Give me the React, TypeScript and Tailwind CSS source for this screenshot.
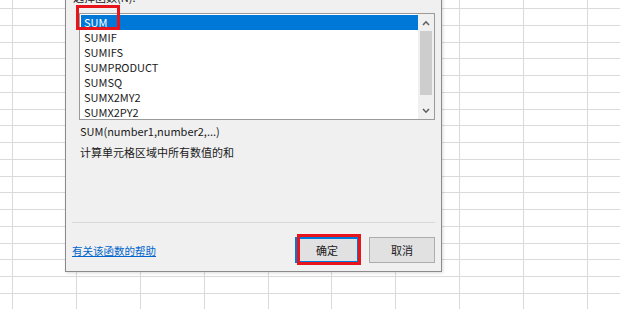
import React from 'react'

const font = { fontFamily: '"Noto Sans CJK SC", "Noto Sans", sans-serif' }

const functions = ['SUM', 'SUMIF', 'SUMIFS', 'SUMPRODUCT', 'SUMSQ', 'SUMX2MY2', 'SUMX2PY2']

function SheetGrid() {
  const rows = Array.from({ length: 19 })
  const cols = Array.from({ length: 9 })
  return (
    <div className="flex flex-col">
      <div className="flex h-[9px] border-b border-[#dadada]">
        <div className="w-[13px] shrink-0 border-r border-[#dadada]" />
        {cols.map((_, c) => (
          <div key={c} className="w-[63.9px] shrink-0 border-r border-[#dadada]" />
        ))}
      </div>
      {rows.map((_, r) => (
        <div key={r} className="flex h-[16.78px] shrink-0 border-b border-[#dadada]">
          <div className="w-[13px] shrink-0 border-r border-[#dadada]" />
          {cols.map((_, c) => (
            <div key={c} className="w-[63.9px] shrink-0 border-r border-[#dadada]" />
          ))}
        </div>
      ))}
    </div>
  )
}

function Chevron({ up }: { up?: boolean }) {
  return (
    <svg width="8" height="6" viewBox="0 0 8 6" className={up ? '' : 'rotate-180'}>
      <path d="M1 5 L4 1.8 L7 5" fill="none" stroke="#606060" strokeWidth="1.6" />
    </svg>
  )
}

function FunctionList() {
  return (
    <div className="relative ml-[13px] mt-[6px] h-[107px] w-[356px] border border-[#9a9a9a] bg-white">
      <div className="flex h-full">
        <div className="flex flex-1 flex-col pl-px pt-px">
          {functions.map((f, i) => (
            <div
              key={f}
              className={`flex h-[15px] items-center pl-[3px] text-[11px] leading-[15px] ${
                i === 0 ? 'bg-[#0078d7] text-white' : 'text-[#1a1a1a]'
              }`}
            >
              {f}
            </div>
          ))}
        </div>
        <div className="flex w-[16px] flex-col bg-[#f0f0f0]">
          <div className="flex h-[17px] items-center justify-center">
            <Chevron up />
          </div>
          <div className="mx-[2px] h-[64px] bg-[#cdcdcd]" />
          <div className="flex-1" />
          <div className="flex h-[17px] items-center justify-center">
            <Chevron />
          </div>
        </div>
      </div>
      {/* red highlight around SUM */}
      <div className="absolute left-[-4px] top-[-9px] h-[25px] w-[44px] border-[3px] border-[#e8141b]" />
    </div>
  )
}

export default function App() {
  return (
    <div className="relative h-[309px] w-[620px] overflow-hidden bg-white" style={font}>
      <SheetGrid />
      <div className="absolute left-[65px] top-[-20px] flex h-[292px] w-[377px] flex-col border border-[#8a8a8a] bg-[#f0f0f0] pt-[9px] shadow-[1px_1px_3px_rgba(0,0,0,0.15)]">
        <div className="ml-[7px] text-[11px] leading-[15px] text-[#1a1a1a]">选择函数(N):</div>
        <div className="h-[2px]" />
        <FunctionList />
        <div className="ml-[14px] mt-[4px] text-[11px] leading-[15px] text-[#1a1a1a]">SUM(number1,number2,...)</div>
        <div className="ml-[14px] mt-[6px] text-[11px] leading-[15px] text-[#1a1a1a]">计算单元格区域中所有数值的和</div>
        <div className="mx-[6px] mt-[62px] h-px bg-[#d9d9d9]" />
        <div className="mx-[6px] mt-[14px] flex items-center">
          <a className="text-[10.5px] leading-[15px] text-[#0066cc] underline">有关该函数的帮助</a>
          <div className="ml-auto flex gap-[10px]">
            <div className="relative flex h-[26px] w-[64px] items-center justify-center border-2 border-[#0078d7] bg-[#e1e1e1] text-[11px] text-[#1a1a1a]">
              确定
              <div className="absolute -top-[5px] left-0 -right-[4px] -bottom-[4px] border-[3px] border-[#e8141b]" />
            </div>
            <div className="flex h-[26px] w-[66px] items-center justify-center border border-[#adadad] bg-[#e1e1e1] text-[11px] text-[#1a1a1a]">
              取消
            </div>
          </div>
        </div>
      </div>
    </div>
  )
}
